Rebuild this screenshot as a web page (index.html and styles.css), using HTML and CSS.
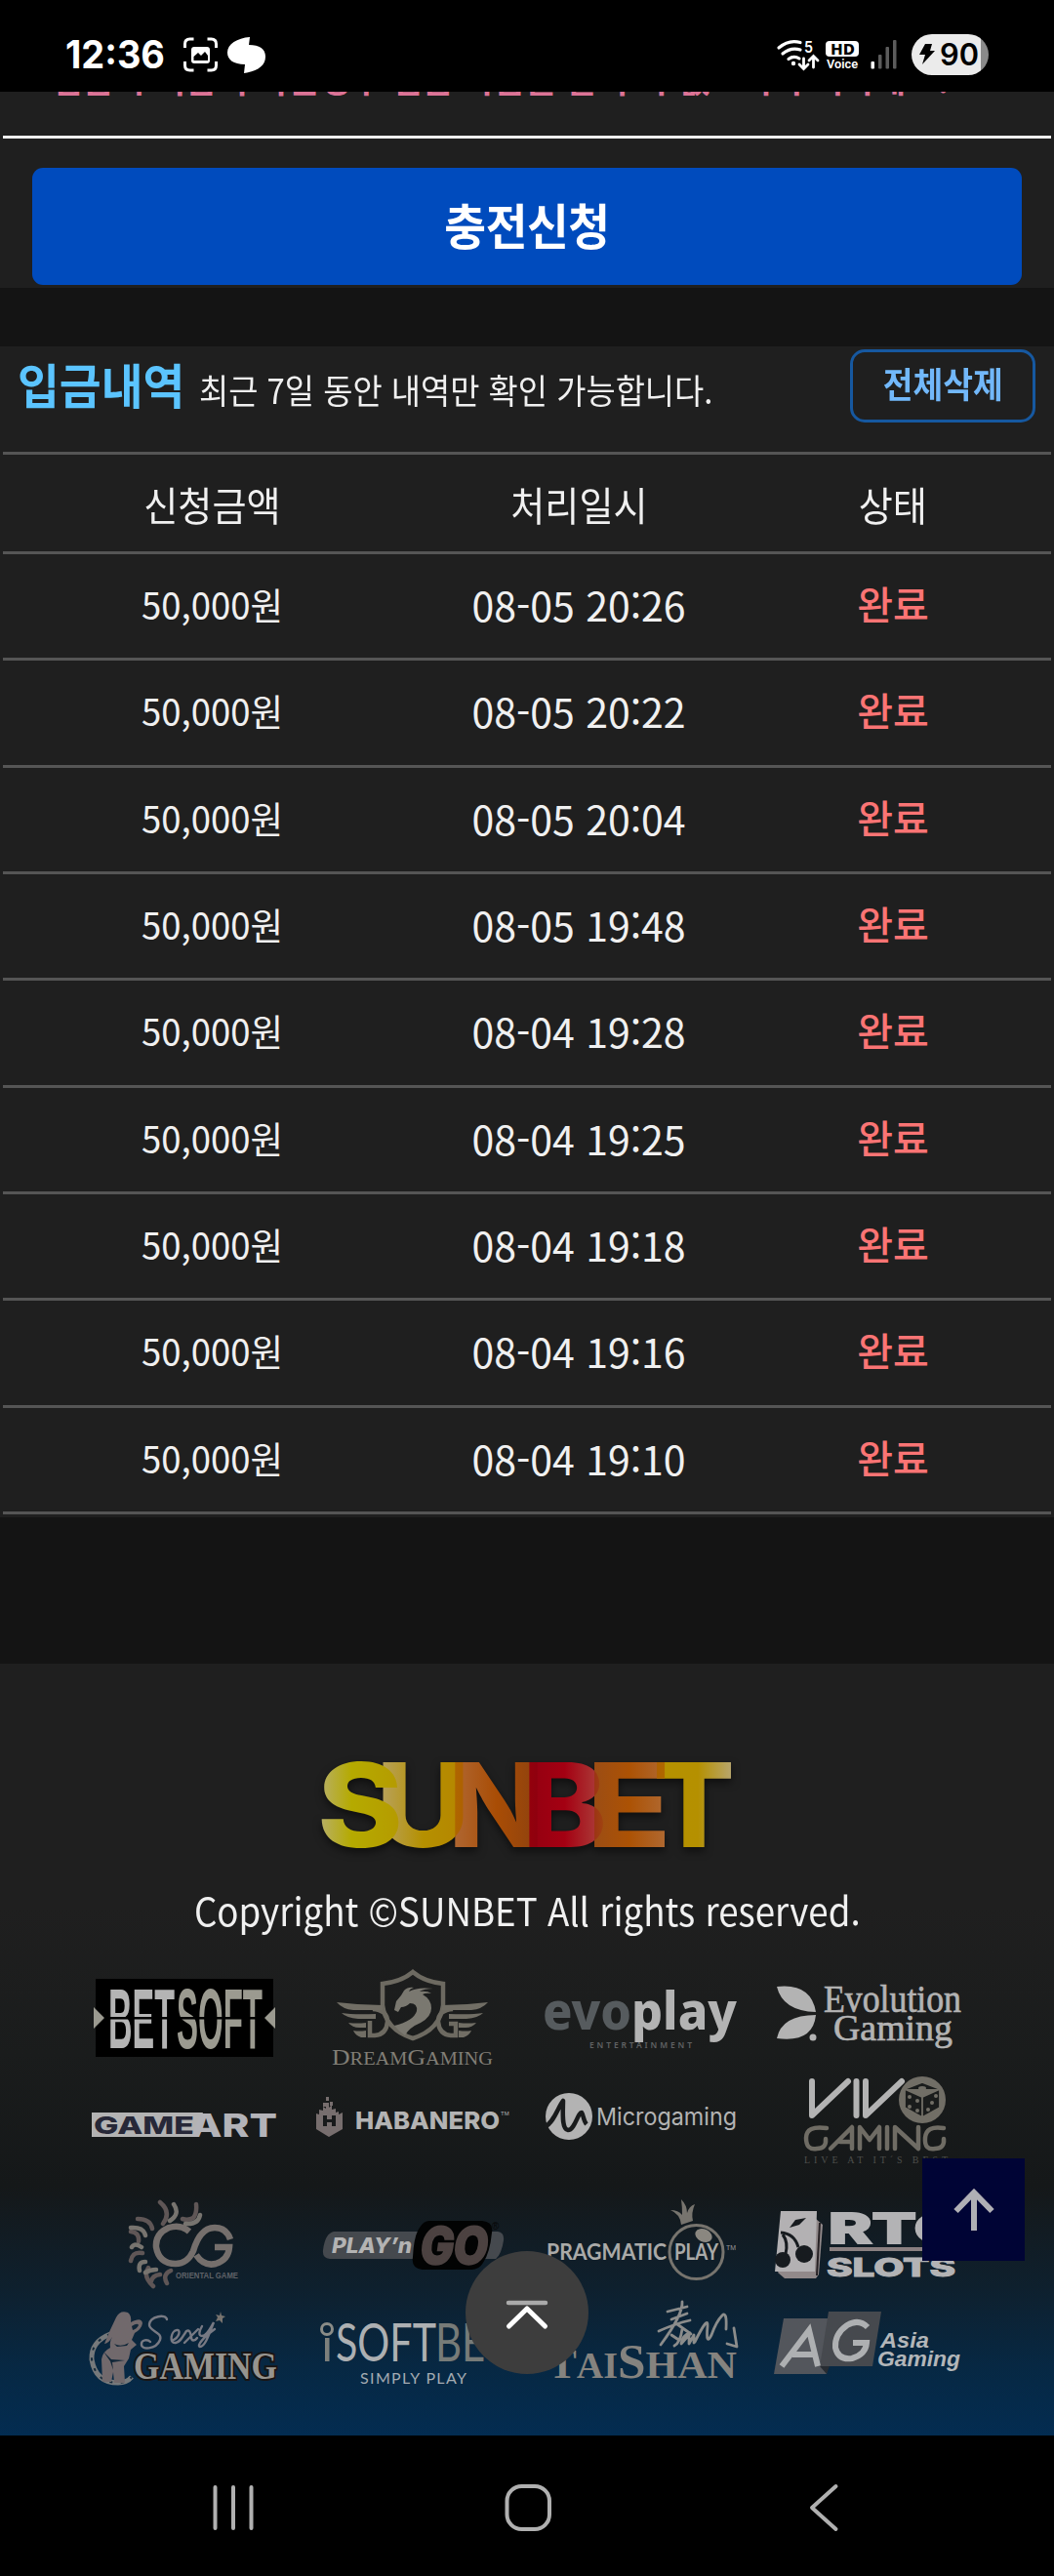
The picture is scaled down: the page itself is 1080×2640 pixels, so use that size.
FILE: index.html
```html
<!DOCTYPE html>
<html lang="ko">
<head>
<meta charset="utf-8">
<title>SUNBET</title>
<link rel="stylesheet" href="styles.css">
</head>
<body>
<header class="status">
  <svg width="1080" height="94" viewBox="0 0 1080 94" fill="#fff">
    <text class="inter b7" x="67" y="70" font-size="39" textLength="102" lengthAdjust="spacingAndGlyphs">12:36</text>
    <path d="M189.500 49v-4q0-5 5-5h4M212.500 40h4q5 0 5 5v4M221.500 63v4q0 5-5 5h-4M198.500 72h-4q-5 0-5-5v-4" fill="none" stroke="#fff" stroke-width="3"/>
    <rect x="196" y="48" width="19" height="17" rx="3"/>
    <path d="M198.500 62v-4l4.500-4 3 3 4-4 3 4v5z" fill="#000"/>
    <path d="M256 38l-1 8c11 0 17 4 17 12 0 10-9 15-22 17l1-9c-12 0-18-5-18-12 0-9 10-15 23-16z"/>
    <g fill="none" stroke="#fff" stroke-width="3.200" stroke-linecap="round">
      <path d="M798 49c7-6 15-7.500 22-5.500M802 55c6-5 12-6 18-4M808 60.500c4-3 7-3 11-.500"/>
      <path d="M823.500 60v10M819 66l4.500 4.500 4.500-4.500M833.500 69V59M829 62l4.500-4.500 4.500 4.500" stroke-width="2.800"/>
    </g>
    <circle cx="813" cy="65" r="2.200"/>
    <text class="inter b6" x="824" y="54" font-size="16" textLength="9" lengthAdjust="spacingAndGlyphs">5</text>
    <rect x="846" y="42" width="34" height="16" rx="4"/>
    <text class="noto b8" x="851" y="56" font-size="15.500" fill="#000" textLength="25" lengthAdjust="spacingAndGlyphs">HD</text>
    <text class="roboto b6" x="847" y="70" font-size="13" textLength="32" lengthAdjust="spacingAndGlyphs">Voice</text>
    <rect x="892.500" y="63" width="3.500" height="7.500" rx="1"/>
    <g fill="#5c5c5c"><rect x="900" y="56" width="3.500" height="14.500" rx="1"/><rect x="907.500" y="48" width="3.500" height="22.500" rx="1"/><rect x="915" y="41" width="3.500" height="29.500" rx="1"/></g>
    <clipPath id="cell"><rect x="934" y="35" width="79" height="42" rx="21"/></clipPath>
    <g clip-path="url(#cell)"><path fill="#ebebeb" d="M934 35h71v42h-71z"/><path fill="#8a8a8a" d="M1005 35h8v42h-8z"/></g>
    <path d="M948 45h7l-2 7h5l-13 14 3-10h-6z" fill="#000"/>
    <text class="inter b6" x="963" y="66.500" font-size="31" fill="#000" textLength="40" lengthAdjust="spacingAndGlyphs">90</text>
  </svg>
</header>

<main>
  <section class="deposit">
    <div class="notice"><svg width="1080" height="12" viewBox="0 94 1080 12"><text class="kr b7" x="53" y="95" font-size="36" fill="#dc7396" textLength="920" lengthAdjust="spacingAndGlyphs">입금시 이름이 다른경우 입금 자금을 할 수가 없으니 주의하세요!</text></svg></div>
    <button class="charge"><span>충전신청</span></button>
  </section>

  <section class="history">
    <div class="history-head">
      <h2>입금내역</h2>
      <p>최근 7일 동안 내역만 확인 가능합니다.</p>
      <button class="clear"><span>전체삭제</span></button>
    </div>
    <div class="table">
      <div class="row head"><span>신청금액</span><span>처리일시</span><span>상태</span></div>
      <div class="row"><span class="amount">50,000원</span><span class="date">08-05 20:26</span><span class="done">완료</span></div>
      <div class="row"><span class="amount">50,000원</span><span class="date">08-05 20:22</span><span class="done">완료</span></div>
      <div class="row"><span class="amount">50,000원</span><span class="date">08-05 20:04</span><span class="done">완료</span></div>
      <div class="row"><span class="amount">50,000원</span><span class="date">08-05 19:48</span><span class="done">완료</span></div>
      <div class="row"><span class="amount">50,000원</span><span class="date">08-04 19:28</span><span class="done">완료</span></div>
      <div class="row"><span class="amount">50,000원</span><span class="date">08-04 19:25</span><span class="done">완료</span></div>
      <div class="row"><span class="amount">50,000원</span><span class="date">08-04 19:18</span><span class="done">완료</span></div>
      <div class="row"><span class="amount">50,000원</span><span class="date">08-04 19:16</span><span class="done">완료</span></div>
      <div class="row"><span class="amount">50,000원</span><span class="date">08-04 19:10</span><span class="done">완료</span></div>
    </div>
  </section>
</main>

<footer class="footer">
  <svg class="brand" width="440" height="110" viewBox="320 1795 440 110">
    <defs>
      <linearGradient id="s"><stop stop-color="#b8b070"/><stop offset=".4" stop-color="#b5aa00"/><stop offset="1" stop-color="#b59a00"/></linearGradient>
      <linearGradient id="u"><stop stop-color="#b8a468"/><stop offset=".5" stop-color="#b59000"/><stop offset="1" stop-color="#b58400"/></linearGradient>
      <linearGradient id="n"><stop stop-color="#b06a38"/><stop offset=".5" stop-color="#a94d05"/><stop offset="1" stop-color="#8a4010"/></linearGradient>
      <linearGradient id="b"><stop stop-color="#900010"/><stop offset=".5" stop-color="#a40012"/><stop offset="1" stop-color="#ad4a42"/></linearGradient>
      <linearGradient id="e"><stop stop-color="#984c18"/><stop offset=".5" stop-color="#ac5204"/><stop offset="1" stop-color="#b06c38"/></linearGradient>
      <linearGradient id="t"><stop stop-color="#b59200"/><stop offset=".55" stop-color="#b59000"/><stop offset="1" stop-color="#b8a878"/></linearGradient>
    </defs>
    <g class="inter b8 brand-letters" font-size="119">
      <text x="325" y="1893" textLength="88" lengthAdjust="spacingAndGlyphs" fill="url(#s)">S</text>
      <text x="385" y="1893" textLength="97" lengthAdjust="spacingAndGlyphs" fill="url(#u)">U</text>
      <text x="459" y="1893" textLength="99" lengthAdjust="spacingAndGlyphs" fill="url(#n)">N</text>
      <text x="535" y="1893" textLength="87" lengthAdjust="spacingAndGlyphs" fill="url(#b)">B</text>
      <text x="601" y="1893" textLength="87" lengthAdjust="spacingAndGlyphs" fill="url(#e)">E</text>
      <text x="669" y="1893" textLength="84" lengthAdjust="spacingAndGlyphs" fill="url(#t)">T</text>
    </g>
  </svg>
  <p class="copyright"><span>Copyright ©SUNBET All rights reserved.</span></p>

  <div class="providers">
    <svg viewBox="72 2010 234 112">
      <path d="M98 2028h182v80H98z" fill="#000"/>
      <path d="M96 2057l11 11-11 11zM282 2057l-11 11 11 11z" fill="#9b9a90"/>
      <g transform="translate(0 2098.500) scale(1 1.950)"><text class="sans b7" x="111" y="0" font-size="45" fill="#b4b4b4" textLength="68" lengthAdjust="spacingAndGlyphs">BET</text><text class="sans b7" x="181" y="0" font-size="45" fill="#9b9a90" textLength="88" lengthAdjust="spacingAndGlyphs">SOFT</text></g>
      <path d="M108 2067h163v2.500H108z" fill="#000"/>
    </svg>
    <svg viewBox="306 2010 234 112">
      <g fill="none" stroke="#6d6a61" stroke-width="4.500">
        <path d="M423 2021q-12 10-31 12v22q3 25 31 34 28-9 31-34v-22q-19-2-31-12z"/>
        <path d="M391 2059h-9q15 1 15 13-1 13-13 14h-5v-15M455 2059h9q-15 1-15 13 1 13 13 14h5v-12h-7"/>
      </g>
      <path fill="#716e65" d="M345 2052q24 3 47 3v5h-30q-11-1-17-8zM350 2063q12 2 35 1v5h-18q-12-1-17-6zM357 2073q9 1 18 0v5h-7q-7 0-11-5zM362 2081q6 1 13 0v7h-5q-6-2-8-7zM500 2052q-24 3-47 3v5h30q11-1 17-8zM495 2063q-12 2-35 1v5h18q12-1 17-6zM488 2073q-9 1-18 0v5h7q7 0 11-5zM483 2081q-6 1-13 0v7h5q6-2 8-7z"/>
      <path fill="#7a7870" d="M404 2060l2-9 5-6 3-5q4-4 10-3-4 1-5 4 9-5 25-3-10 0-14 3 8-1 12 2-6-1-9 1 9 5 9 14 0 9-11 15-12 5-16 13-6-4-11-10 20-5 23-15 1-8-7-8-4 4-9 4l-3 5z"/>
      <text class="serif" x="340" y="2116" font-size="24" fill="#817e76" textLength="165" lengthAdjust="spacingAndGlyphs">D<tspan font-size="19">REAM</tspan>G<tspan font-size="19">AMING</tspan></text>
    </svg>
    <svg viewBox="540 2010 234 112">
      <text class="noto b8" x="556" y="2080" font-size="54" fill="#565b5e" textLength="91" lengthAdjust="spacingAndGlyphs">evo</text>
      <text class="noto b8" x="647" y="2080" font-size="54" fill="#b3b3b3" textLength="108" lengthAdjust="spacingAndGlyphs">play</text>
      <text class="noto b6" x="604" y="2099" font-size="8.500" fill="#606263" textLength="105">ENTERTAINMENT</text>
    </svg>
    <svg viewBox="774 2010 234 112" fill="#b3b3b3">
      <path d="M796 2036q35-4 40 26-34-1-40-26zM836 2065q-3 29-40 24 5-24 40-24z"/><circle cx="833" cy="2088" r="3.500"/>
      <g stroke="#b3b3b3" stroke-width=".7"><text class="serif" x="844" y="2062" font-size="39" textLength="141" lengthAdjust="spacingAndGlyphs">Evolution</text>
      <text class="serif" x="854" y="2091" font-size="38" textLength="122" lengthAdjust="spacingAndGlyphs">Gaming</text></g>
    </svg>

    <svg viewBox="72 2122 234 118">
      <path d="M94 2165h114l-10 25H94z" fill="#b3b3b3"/>
      <text class="inter b8" x="96" y="2187" font-size="25" fill="#272838" textLength="103" lengthAdjust="spacingAndGlyphs">GAME</text>
      <text class="inter b8" x="195" y="2190" font-size="33" fill="#b3b3b8" textLength="89" lengthAdjust="spacingAndGlyphs">ART</text>
    </svg>
    <svg viewBox="306 2122 234 118">
      <path d="M324 2166l3 1v-5l4 1v-4l3 2v-6h3v5l3-3v5l4-1v4l3-1v3l4-2v17l-14 8-13-8zM334 2149h3v4h-3zM338 2154h3v4h-3zM331 2155h3v4h-3z" fill="#776e6e"/>
      <path d="M331 2168h4v4h5v-4h4v11h-4v-4h-5v4h-4z" fill="#181a1b"/>
      <text class="inter b8" x="364" y="2182" font-size="25" fill="#b3b3b3" textLength="148" lengthAdjust="spacingAndGlyphs">HABANERO</text>
      <text class="sans" x="513" y="2168" font-size="6" fill="#b3b3b3">TM</text>
    </svg>
    <svg viewBox="540 2122 234 118">
      <circle cx="583" cy="2169" r="24" fill="#b3b3b3"/>
      <path d="M558 2180c10-5 14-21 19-27 0 10-2 29 5 30 7 0 10-18 14-18 2 3 2 9 5 12" fill="none" stroke="#191b1c" stroke-width="4.500" stroke-linejoin="round"/>
      <text class="inter" x="611" y="2178" font-size="24.500" fill="#b3b3b3" textLength="144" lengthAdjust="spacingAndGlyphs">Microgaming</text>
    </svg>
    <svg viewBox="774 2122 234 118">
      <path d="M832 2133v35l37-35M877.500 2133v35M887 2133v35l37-35" fill="none" stroke="#b3b3b3" stroke-width="6" stroke-linecap="round" stroke-linejoin="round"/>
      <circle cx="945" cy="2152" r="24" fill="#716e66"/>
      <path d="M945 2134l18 7v19l-18 10-18-10v-19zM927 2141l18 8 18-8M945 2149v21" fill="#1a1c1c" stroke="#716e66" stroke-width="1.800"/>
      <g fill="#716e66"><ellipse cx="945" cy="2140" rx="4" ry="2"/><circle cx="932" cy="2149" r="2"/><circle cx="940" cy="2153" r="2"/><circle cx="932" cy="2159" r="2"/><circle cx="940" cy="2163" r="2"/><circle cx="959" cy="2148" r="2"/><circle cx="955" cy="2155" r="2"/><circle cx="951" cy="2162" r="2"/></g>
      <g fill="none" stroke="#6f6c64" stroke-width="4.500" stroke-linecap="round" stroke-linejoin="round"><path d="M847 2181q-21-3-21 10t11 11q10 0 9-10M851 2202l22-22v22M861 2195h9M881 2202v-22l10 13 10-13v22M909 2180v22M917 2202v-22l24 22v-22M967 2181q-18-3-19 10t10 11q10 0 9-10"/></g>
      <text class="serif" x="824" y="2217" font-size="10" fill="#4e4f4c" textLength="147">LIVE AT IT´S BEST</text>
    </svg>

    <svg viewBox="72 2240 234 112">
      <g fill="none" stroke-width="4.500" stroke-linecap="round" stroke="#5f5656">
        <path d="M167 2279q9-12-3-22M187 2274q6 2 11-1 4-5 3-14M156 2284q-2-10-15-10M142 2297q1-9-8-10M146 2309q-10-2-12 8M152 2324q-6 9 5 19M171 2340q-5-9 4-13M164 2331q-8 1-9 7"/>
        <path stroke="#77746f" d="M174 2276q11-7 4-17M190 2279q13 1 15-9M149 2291q-2-9-15-8M145 2303q-7-5-10 0M149 2318q-8 0-6 9M160 2326q-6 0-11 3"/>
        <path stroke="#756f6c" stroke-width="6.500" stroke-linecap="butt" d="M194 2287q-9-8-21-4-14 6-13 20 3 17 20 17 12 0 18-13 7-24 22-24 12 0 16 12M201 2311q8 12 20 9 13-4 14-17h-15"/>
      </g>
      <text class="sans b7" x="180" y="2335" font-size="9.500" fill="#5f6268" textLength="64" lengthAdjust="spacingAndGlyphs">ORIENTAL GAME</text>
    </svg>
    <svg viewBox="306 2240 234 112">
      <path d="M342 2287h168q7 1 6 9-2 14-8 19H338q-8-1-7-9 2-17 11-19z" fill="#45494e"/>
      <text class="inter b8 it" x="340" y="2309" font-size="22" fill="#b3b3b3" textLength="82" lengthAdjust="spacingAndGlyphs">PLAY’n</text>
      <path d="M440 2276h54q12 1 10 12-2 21-9 31-4 7-12 7h-50q-12-1-10-13 1-22 7-30 4-7 10-7z" fill="#020303"/>
      <g transform="translate(429 2320) skewX(-8)"><text class="inter b8" x="0" y="0" font-size="52" fill="#4c4241" stroke="#4c4241" stroke-width="2.500" textLength="69" lengthAdjust="spacingAndGlyphs">GO</text></g>
      <text class="sans" x="504" y="2285" font-size="10" fill="#050505">®</text>
    </svg>
    <svg viewBox="540 2240 234 112">
      <text class="lato b7" x="560" y="2316" font-size="22" fill="#aaaaa8" textLength="123" lengthAdjust="spacingAndGlyphs">PRAGMATIC</text>
      <circle cx="713.500" cy="2308" r="27.500" fill="none" stroke="#77746e" stroke-width="3"/>
      <path d="M698 2280q-1-11-11-15 8 0 12 5 0-9-1-16 6 6 6 14 2-7 8-9-4 9-2 17z" fill="#77746e"/>
      <ellipse cx="721" cy="2291" rx="9" ry="6.500" transform="rotate(25 721 2291)" fill="#8a8780"/>
      <text class="lato b7" x="691" y="2316" font-size="22" fill="#aaaaa8" textLength="45" lengthAdjust="spacingAndGlyphs">PLAY</text>
      <text class="sans" x="744" y="2306" font-size="7" fill="#999">TM</text>
    </svg>
    <svg viewBox="774 2240 234 112">
      <path d="M836 2274l7 6-4 51-3 4h-32l-7-6z" fill="#91898a"/><path d="M800 2266h37l-2 62h-41z" fill="#b3b1b3"/>
      <path d="M840 2278l-3 54" stroke="#272225" stroke-width="2"/>
      <path d="M809 2283l6-8 11-2-7 7z" fill="#171b1f"/><path d="M800 2288q14 1 18 15M802 2290q6 8 3 20" fill="none" stroke="#171b1f" stroke-width="3"/>
      <circle cx="802" cy="2316" r="8" fill="#171b1f"/><circle cx="824" cy="2310" r="9" fill="#171b1f"/>
      <g fill="#b3b3b5" stroke="#b3b3b5"><text class="inter b8" x="849" y="2299" font-size="43" stroke-width="2" textLength="138" lengthAdjust="spacingAndGlyphs">RTG</text>
      <text class="inter b8" x="847" y="2333" font-size="26" stroke-width="1" textLength="132" lengthAdjust="spacingAndGlyphs">SLOTS</text></g>
      <path d="M850 2303h130v4H850z" fill="#8a8081"/>
    </svg>

    <svg viewBox="72 2352 234 112">
      <path d="M113 2392q-20 8-19 26 4 24 27 24 9 0 14-6" fill="none" stroke="#76797b" stroke-width="5"/><path d="M113 2392q-20 8-19 26 4 24 27 24 9 0 14-6" fill="none" stroke="#172b3b" stroke-width="2" stroke-dasharray="3 8"/>
      <path fill="#71696c" d="M119 2375q4-8 12-5 4 3 3 10 11-6 12 1-1 6-8 10l-3 7 5 5-6 5-2 9-5 8 1 17h-11l-1-11-2 10h-9l-1-23q1-8 9-12-1-6 2-11-4 7-8 7 5-13 12-27z"/>
      <path fill="#102638" d="M135 2384q6-4 7-1-2 4-6 5zM117 2402q7 4 15-1l-2 3-10 1zM106 2410l8 8 14 1-13 2 1 8-3-9z"/>
      <path d="M171 2377c-1-6-17-3-18 5-1 7 14 8 11 16-4 10-20 11-19 4 0-4 6-5 9-2M176 2399c9-4 9-12 5-11-6 1-8 14-1 13 5-1 7-6 11-12 3-2 4 1 5 6 0 5 4 4 6 1M203 2387l-14 14M207 2384c-3 5-4 10 0 10 5 0 8-7 12-14-5 13-9 25-14 25-4-1 4-10 15-18" fill="none" stroke="#777983" stroke-width="2.400" stroke-linecap="round"/>
      <path d="M226 2369l1 4 4 1-3 2v5l-3-3-4 1 2-4-2-3 4 1z" fill="#77736f"/>
      <text class="serif b7 sexy" x="137" y="2438" font-size="39" textLength="147" lengthAdjust="spacingAndGlyphs">GAMING</text>
    </svg>
    <svg viewBox="306 2352 234 112">
      <circle cx="335" cy="2387" r="5.500" fill="none" stroke="#8a8c87" stroke-width="3"/><path d="M333 2396h4.500v24H333z" fill="#7d807c"/>
      <g transform="translate(0 2420) scale(1 1.400)"><text class="lato" x="344" y="0" font-size="39" fill="#adb0b2" textLength="103" lengthAdjust="spacingAndGlyphs">SOFT</text><text class="lato" x="446" y="0" font-size="39" fill="#777b78" textLength="76" lengthAdjust="spacingAndGlyphs">BET</text></g>
      <text class="lato" x="369" y="2443" font-size="16" fill="#a3abb2" textLength="109">SIMPLY PLAY</text>
    </svg>
    <svg viewBox="540 2352 234 112" fill="#85837f">
      <text class="serif b7" x="562" y="2437" font-size="42" textLength="193" lengthAdjust="spacingAndGlyphs">T<tspan font-size="37">AI</tspan><tspan font-size="50">S</tspan><tspan font-size="41">HAN</tspan></text>
      <g fill="none" stroke="#8b8c8b" stroke-width="2.800" stroke-linecap="round" stroke-linejoin="round"><path d="M684 2369l20-5M688 2377l16-6M675 2389q18-8 32-11M699 2359q1 13-22 44M694 2382l14 10M699 2387q-2 14-8 17M688 2393l6 4M707 2391q-8 2-9 11l8-9 0 9 5-9v8M712 2400q14-28 13-16-2 21 4 9 5-14 11-20 5-5 4 14M752 2386l3 19-10-3"/></g>
    </svg>
    <svg viewBox="774 2352 234 112">
      <path d="M803 2376h50l-6 57h-54z" fill="#53565c"/><path d="M849 2369h54l-9 56h-54z" fill="#46494e"/><path d="M840 2425h10l-3 8z" fill="#272c32"/>
      <g fill="none" stroke="#aeb0b2" stroke-width="6"><path d="M801 2425l28-37 9 37M812 2413h22"/><path d="M889 2385q-9-9-21-2-13 9-12 23 3 13 17 11 14-4 15-16h-14"/></g>
      <text class="sans b7 it" x="902" y="2406" font-size="22" fill="#b3b6b9" textLength="50" lengthAdjust="spacingAndGlyphs">Asia</text>
      <text class="sans b7 it" x="899" y="2425" font-size="22" fill="#b3b6b9" textLength="85" lengthAdjust="spacingAndGlyphs">Gaming</text>
    </svg>
  </div>
  <button class="to-top"><svg width="105" height="105" viewBox="0 0 105 105"><path d="M53 74V35M34.500 54L53 35l18.500 19" fill="none" stroke="#b0b0b5" stroke-width="6"/></svg></button>
  <button class="scroll-up"><svg width="126" height="126" viewBox="0 0 126 126" fill="none" stroke-linecap="round" stroke-linejoin="round"><path d="M44 53h38" stroke="#aaa" stroke-width="4.500"/><path d="M44.500 77L63 59l18.500 18" stroke="#fff" stroke-width="5"/></svg></button>
</footer>

<nav class="nav">
  <svg width="1080" height="144" viewBox="0 2496 1080 144" fill="none" stroke="#b0b0b0" stroke-width="4" stroke-linecap="round" stroke-linejoin="round">
    <path d="M220.500 2549v42M239 2549v42M257.500 2549v42"/><rect x="519.500" y="2548" width="43.500" height="44" rx="15"/><path d="M856.500 2548L832 2570l24.500 22"/>
  </svg>
</nav>
</body>
</html>
```
FILE: styles.css
```css
* { box-sizing: border-box; }
body {
  margin: 0;
  width: 1080px;
  background: #141414;
  color: #f0f0f0;
  font-family: "Noto Sans CJK KR", sans-serif;
}
svg { display: block; }
h2, p { margin: 0; }
button { border: 0; padding: 0; font-family: inherit; }

.inter { font-family: Inter, sans-serif; }
.noto { font-family: "Noto Sans", sans-serif; }
.roboto { font-family: Roboto, sans-serif; }
.lato { font-family: Lato, sans-serif; }
.sans { font-family: "Liberation Sans", sans-serif; }
.serif { font-family: "Liberation Serif", serif; }
.kr { font-family: "Noto Sans CJK KR", sans-serif; }
.b6 { font-weight: 600; }
.b7 { font-weight: 700; }
.b8 { font-weight: 800; }
.it { font-style: italic; }

.status { height: 94px; background: #000; }

.deposit { height: 201px; background: #1f1f1f; }
.notice {
  height: 48px;
  margin: 0 3px;
  border-bottom: 3px solid #efefef;
}
.notice svg { margin-left: -3px; }
.charge {
  display: flex;
  align-items: center;
  justify-content: center;
  width: 1014px;
  height: 120px;
  margin: 30px auto 0;
  border-radius: 11px;
  background: #004bbd;
  color: #fff;
  font-size: 50px;
  font-weight: 700;
}
.charge span { transform: scaleX(.93); margin-top: -7px; letter-spacing: -.5px; }

.history { height: 1200px; margin-top: 60px; padding: 0 3px; background: #1f1f1f; }
.history-head { display: flex; height: 111px; padding: 3px 16px 0 15px; border-bottom: 3px solid #555; }
.history-head h2 {
  width: 186px;
  height: 75px;
  line-height: 70px;
  color: #5bc4ff;
  font-size: 49px;
  font-weight: 700;
  white-space: nowrap;
  transform: scaleX(.95);
  transform-origin: left;
}
.history-head p {
  height: 75px;
  line-height: 81px;
  font-size: 35px;
  white-space: nowrap;
  transform: scaleX(.938);
  transform-origin: left;
}
.clear {
  display: flex;
  align-items: center;
  justify-content: center;
  width: 190px;
  height: 75px;
  margin-left: auto;
  border: 3px solid #1658a0;
  border-radius: 15px;
  background: none;
  color: #72b8fa;
  font-size: 36px;
  font-weight: 700;
}
.clear span { transform: scaleX(.93); margin-top: -7px; }

.row {
  display: grid;
  grid-template-columns: 428px 324px 320px;
  align-items: center;
  justify-items: center;
  height: 109.33px;
  border-bottom: 3px solid #555;
  line-height: 60px;
}
.row.head { height: 102px; font-size: 41px; }
.row.head span { transform: scaleX(.93); }
.amount { font-size: 38px; transform: translate(1px, -2px) scaleX(.96); }
.date { font-size: 41px; transform: translateY(-2px); }
.done { font-size: 40px; font-weight: 500; color: #fa7474; transform: translateY(-3px); }

.footer {
  position: relative;
  height: 791px;
  margin-top: 150px;
  padding-top: 90px;
  background: linear-gradient(#1f1f1f 0, #1f1f1f 250px, #1a1c1c 400px, #151819 535px, #0e202e 640px, #072843 720px, #032c51 791px);
}
.brand { margin: 0 auto; filter: drop-shadow(0 4px 4px #0008); }
.brand-letters { isolation: isolate; }
.brand-letters text { mix-blend-mode: darken; }
.copyright { height: 105px; line-height: 104px; font-size: 40px; text-align: center; white-space: nowrap; }
.copyright span { display: inline-block; transform: scaleX(.917); }
.providers {
  display: grid;
  grid-template-columns: repeat(4, 234px);
  grid-template-rows: 112px 118px 112px 112px;
  justify-content: center;
}
.sexy { fill: #96948f; stroke: #191514; stroke-width: 4px; paint-order: stroke; }
.to-top { position: absolute; left: 945px; top: 507px; width: 105px; height: 105px; background: #000435; }
.scroll-up { position: absolute; left: 477px; top: 602px; width: 126px; height: 126px; border-radius: 50%; background: #3d3d3d; }

.nav { height: 144px; background: #000; }
```
